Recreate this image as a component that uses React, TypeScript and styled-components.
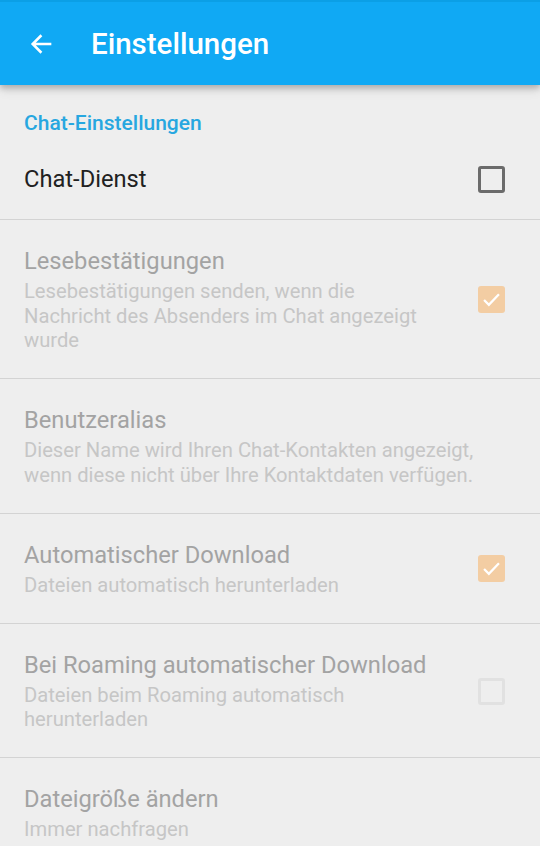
import React from "react";
import styled, { createGlobalStyle } from "styled-components";

const Global = createGlobalStyle`
  html, body { margin: 0; padding: 0; background: #eeeeee; }
  body { font-family: Roboto, "Noto Sans", Arial, sans-serif; -webkit-font-smoothing: antialiased; }
  * { box-sizing: border-box; }
`;

const Screen = styled.div`
  width: 540px;
  height: 846px;
  overflow: hidden;
  background: #eeeeee;
  display: flex;
  flex-direction: column;
`;

const AppBar = styled.header`
  height: 85px;
  flex: none;
  background: #10a9f4;
  border-top: 2px solid #0b9fe6;
  display: flex;
  align-items: center;
  padding-left: 28px;
  gap: 35px;
  position: relative;
  z-index: 1;
  box-shadow: 0 3px 6px rgba(0, 0, 0, 0.22), 0 6px 10px rgba(0, 0, 0, 0.08);
`;

const BackButton = styled.button`
  width: 28px;
  height: 28px;
  padding: 0;
  border: 0;
  background: transparent;
  display: flex;
  align-items: center;
  justify-content: center;
`;

const Title = styled.h1`
  margin: 0;
  color: #ffffff;
  font-size: 29.5px;
  font-weight: 500;
  line-height: 34px;
`;

const List = styled.div`
  display: flex;
  flex-direction: column;
`;

const Category = styled.div`
  padding: 26px 24px 10px;
  color: #27a7e0;
  font-size: 21px;
  font-weight: 500;
  line-height: 24px;
`;

const Row = styled.div<{ $last?: boolean }>`
  display: flex;
  align-items: center;
  padding: 27px 35px 25.5px 24px;
  border-bottom: ${(p) => (p.$last ? "none" : "1px solid #d3d3d3")};
`;

const SimpleRow = styled(Row)`
  padding-top: 20px;
  padding-bottom: 26px;
`;

const Texts = styled.div`
  flex: 1;
  min-width: 0;
  display: flex;
  flex-direction: column;
  gap: 4px;
  padding-right: 16px;
`;

const RowTitle = styled.div<{ $disabled?: boolean }>`
  font-size: 23.7px;
  line-height: 28px;
  color: ${(p) => (p.$disabled ? "#a3a3a3" : "#212121")};
`;

const Summary = styled.div`
  font-size: 20.2px;
  line-height: 24.5px;
  color: #c6c6c6;
  white-space: nowrap;
`;

const Box = styled.div<{ $variant: "off" | "checked" | "offDisabled" }>`
  width: 27px;
  height: 27px;
  flex: none;
  border-radius: 3px;
  display: flex;
  align-items: center;
  justify-content: center;
  background: ${(p) => (p.$variant === "checked" ? "#f3cda3" : "transparent")};
  border: ${(p) =>
    p.$variant === "off"
      ? "3px solid #6b6b6b"
      : p.$variant === "offDisabled"
      ? "3px solid #e1e1e1"
      : "none"};
`;

const Check = () => (
  <svg width="21" height="21" viewBox="0 0 24 24" fill="none">
    <path d="M3.5 12.5l5.5 5.5L20.5 6" stroke="#ffffff" strokeWidth="2.6" />
  </svg>
);

type Item = {
  title: string;
  lines: string[];
  box?: "off" | "checked" | "offDisabled";
};

const items: Item[] = [
  {
    title: "Lesebestätigungen",
    lines: ["Lesebestätigungen senden, wenn die", "Nachricht des Absenders im Chat angezeigt", "wurde"],
    box: "checked",
  },
  {
    title: "Benutzeralias",
    lines: ["Dieser Name wird Ihren Chat-Kontakten angezeigt,", "wenn diese nicht über Ihre Kontaktdaten verfügen."],
  },
  {
    title: "Automatischer Download",
    lines: ["Dateien automatisch herunterladen"],
    box: "checked",
  },
  {
    title: "Bei Roaming automatischer Download",
    lines: ["Dateien beim Roaming automatisch", "herunterladen"],
    box: "offDisabled",
  },
  {
    title: "Dateigröße ändern",
    lines: ["Immer nachfragen"],
  },
];

export default function App() {
  return (
    <Screen>
      <Global />
      <AppBar>
        <BackButton aria-label="Zurück">
          <svg width="28" height="28" viewBox="0 0 24 24" fill="none">
            <path d="M20 12H4.5M11.5 4.5L4 12l7.5 7.5" stroke="#ffffff" strokeWidth="2.2" />
          </svg>
        </BackButton>
        <Title>Einstellungen</Title>
      </AppBar>
      <List>
        <Category>Chat-Einstellungen</Category>
        <SimpleRow>
          <Texts>
            <RowTitle>Chat-Dienst</RowTitle>
          </Texts>
          <Box $variant="off" />
        </SimpleRow>
        {items.map((it, i) => (
          <Row key={it.title} $last={i === items.length - 1}>
            <Texts>
              <RowTitle $disabled>{it.title}</RowTitle>
              <Summary>
                {it.lines.map((l, j) => (
                  <React.Fragment key={j}>
                    {l}
                    {j < it.lines.length - 1 && <br />}
                  </React.Fragment>
                ))}
              </Summary>
            </Texts>
            {it.box && <Box $variant={it.box}>{it.box === "checked" && <Check />}</Box>}
          </Row>
        ))}
      </List>
    </Screen>
  );
}
